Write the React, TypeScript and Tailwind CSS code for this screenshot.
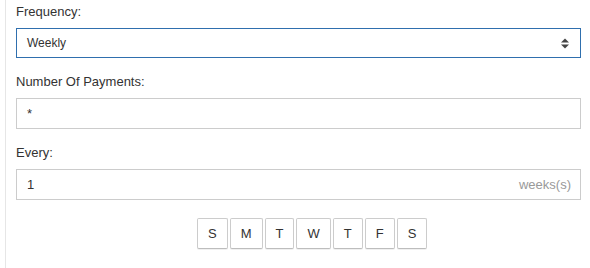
import React from "react";

function Label({ children }: { children: React.ReactNode }) {
  return <div className="text-[13px] leading-[18px] mb-[7px] text-[#333]">{children}</div>;
}

export default function App() {
  const days = ["S", "M", "T", "W", "T", "F", "S"];
  return (
    <div className="w-[590px] h-[268px] bg-white font-['Liberation_Sans',Arial,sans-serif] text-[#333] overflow-hidden">
      <div className="ml-[5px] h-full border-l border-[#e6e6e6] pl-[10px] pr-[9px] pt-[3px]">
        <div className="mb-[15px]">
          <Label>Frequency:</Label>
          <div className="h-[30px] border border-[#2f6fae] flex items-center justify-between pl-[10px] pr-[10px] text-[12px]">
            <span>Weekly</span>
            <svg width="8" height="11" viewBox="0 0 8 11" className="mr-[1px]">
              <path d="M0 4.5 L4 0.5 L8 4.5 Z" fill="#444" />
              <path d="M0 6.5 L4 10.5 L8 6.5 Z" fill="#444" />
            </svg>
          </div>
        </div>
        <div className="mb-[15px]">
          <Label>Number Of Payments:</Label>
          <div className="h-[31px] border border-[#cccccc] flex items-center pl-[10px] text-[13px]">
            <span>*</span>
          </div>
        </div>
        <div>
          <Label>Every:</Label>
          <div className="h-[31px] border border-[#cccccc] flex items-center justify-between pl-[10px] pr-[9px] text-[13px]">
            <span>1</span>
            <span className="text-[#999]">weeks(s)</span>
          </div>
        </div>
        <div className="flex gap-[2px] ml-[181px] mt-[18px]">
          {days.map((d, i) => (
            <div
              key={i}
              className="h-[31px] px-[10px] border border-[#cccccc] border-b-[#bdbdbd] rounded-[2px] bg-white flex items-center justify-center text-[13px] text-[#333] shadow-[0_1px_0_rgba(0,0,0,0.06)]"
            >
              {d}
            </div>
          ))}
        </div>
      </div>
    </div>
  );
}
